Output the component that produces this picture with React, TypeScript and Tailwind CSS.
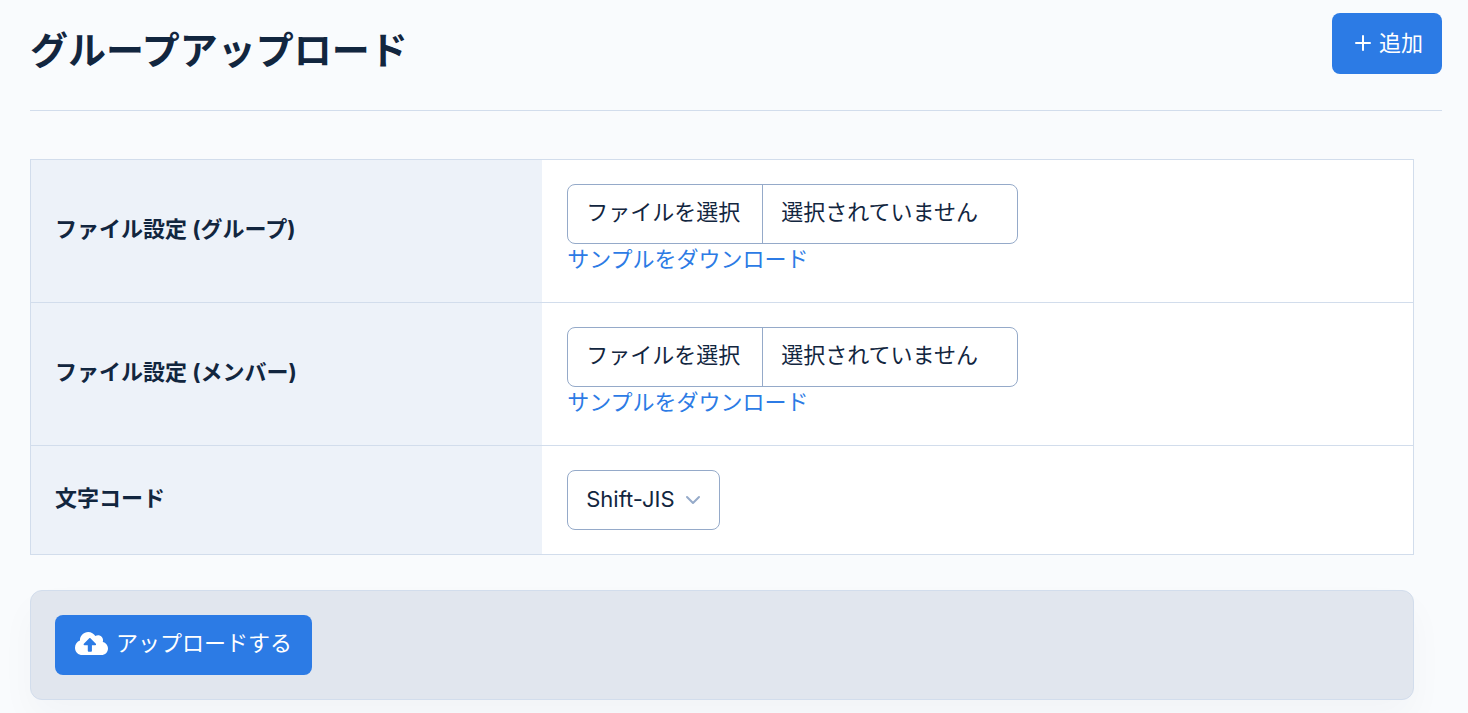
import { useState } from "react";
import { FaCloudUploadAlt } from "react-icons/fa";
import { FiChevronDown, FiPlus } from "react-icons/fi";

const headCell = "w-[37%] bg-[#edf2f9] px-6 pb-1 text-left align-middle font-bold";
const bodyCell = "bg-white py-6 pr-6 pl-[25px] text-left align-middle";

function FilePicker({ id, label }: { id: string; label: string }) {
  const [name, setName] = useState("");
  return (
    <tr className="border-b border-[#d2ddec]">
      <th scope="row" className={headCell}>
        {label}
      </th>
      <td className={bodyCell}>
        <label
          htmlFor={id}
          className="relative flex h-15 w-fit cursor-pointer items-stretch rounded-lg border border-[#95aac9] focus-within:border-[#2c7be5]"
        >
          <input
            id={id}
            type="file"
            aria-label={label}
            className="sr-only"
            onChange={(e) => setName(e.target.files?.[0]?.name ?? "")}
          />
          <span className="flex w-[195px] items-center border-r border-[#95aac9] px-[18px] pb-1">
            ファイルを選択
          </span>
          <span className="flex w-[254px] items-center truncate px-[18px] pb-1">
            {name || "選択されていません"}
          </span>
        </label>
        <a href="#sample" className="block w-fit pb-1 leading-[30px] text-[#2c7be5] hover:underline">
          サンプルをダウンロード
        </a>
      </td>
    </tr>
  );
}

export default function App() {
  return (
    <main className="min-h-screen bg-[#f9fbfd] pr-[26px] pb-3 pl-[30px] font-[Inter,'Noto_Sans_CJK_JP',sans-serif] text-[22px] leading-[34px] text-[#12263f]">
      <header className="flex items-start justify-between border-b border-[#d2ddec] pt-[13px] pb-9">
        <h1 className="pt-2 font-['Noto_Sans_CJK_JP',sans-serif] text-[38px] leading-[53px] font-bold">
          グループアップロード
        </h1>
        <button
          type="button"
          className="flex h-[61px] items-center gap-1 rounded-lg bg-[#2c7be5] px-[19px] pb-0.5 text-white hover:bg-[#1a68d1]"
        >
          <FiPlus className="size-6" aria-hidden="true" />
          追加
        </button>
      </header>

      <form className="mt-12 mr-7" onSubmit={(e) => e.preventDefault()}>
        <table className="w-full border-collapse border border-[#d2ddec]">
          <tbody>
            <FilePicker id="group-file" label="ファイル設定 (グループ)" />
            <FilePicker id="member-file" label="ファイル設定 (メンバー)" />
            <tr>
              <th scope="row" className={headCell}>
                <label htmlFor="encoding">文字コード</label>
              </th>
              <td className={bodyCell}>
                <div className="relative w-fit">
                  <select
                    id="encoding"
                    className="block h-15 w-[153px] appearance-none rounded-lg border border-[#95aac9] bg-white pr-10 pb-0.5 pl-[18px]"
                  >
                    <option>Shift-JIS</option>
                    <option>UTF-8</option>
                  </select>
                  <FiChevronDown
                    className="pointer-events-none absolute top-[18px] right-[15px] size-6 text-[#95aac9]"
                    aria-hidden="true"
                  />
                </div>
              </td>
            </tr>
          </tbody>
        </table>

        <div className="mt-[35px] rounded-xl border border-[#d2ddec] bg-[#e1e6ee] p-6 shadow-[0_18px_36px_rgba(18,38,63,0.03)]">
          <button
            type="submit"
            className="flex h-15 items-center gap-2 rounded-lg bg-[#2c7be5] px-5 pb-1 text-white hover:bg-[#1a68d1]"
          >
            <FaCloudUploadAlt className="h-[27px] w-[33px]" aria-hidden="true" />
            アップロードする
          </button>
        </div>
      </form>
    </main>
  );
}
